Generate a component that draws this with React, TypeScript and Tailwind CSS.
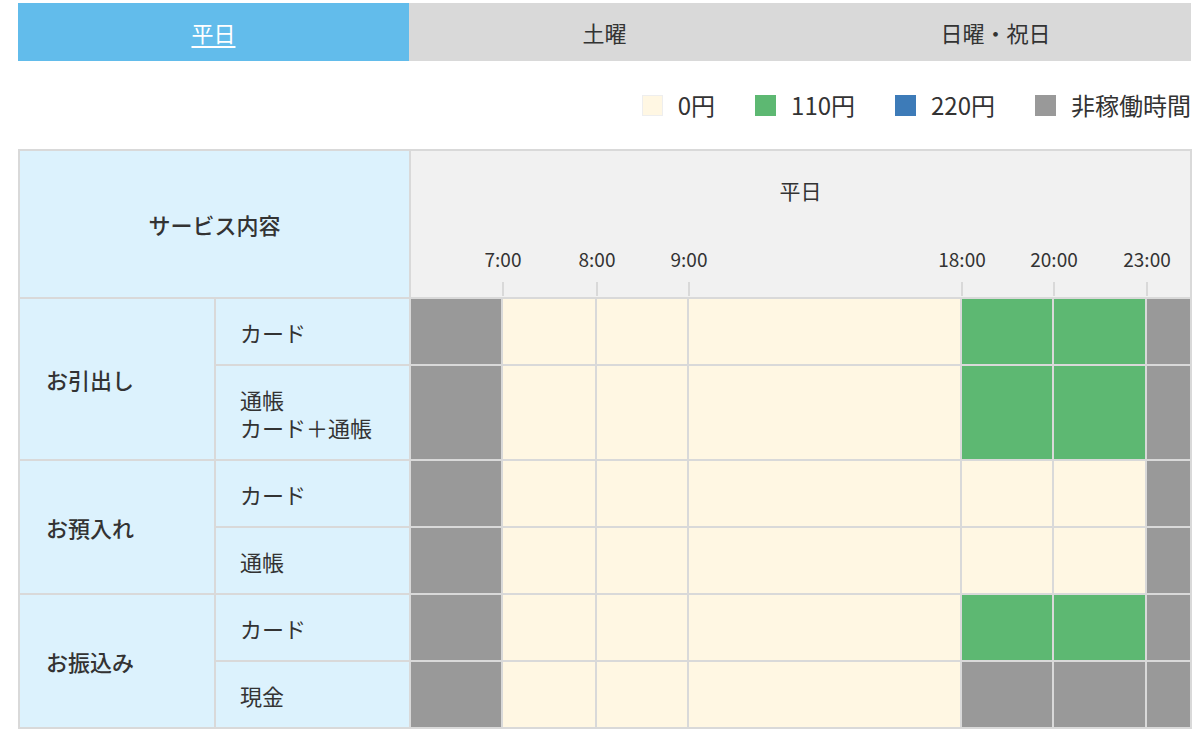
import React from 'react';

type Cell = 'off' | 'free' | 'fee110' | 'fee220';

interface Row {
  label: React.ReactNode;
  cells: Cell[];
  tall?: boolean;
}

interface Group {
  name: string;
  rows: Row[];
}

const cellColor: Record<Cell, string> = {
  off: 'bg-[#999999]',
  free: 'bg-[#fff7e3]',
  fee110: 'bg-[#5db872]',
  fee220: 'bg-[#3d7bb8]',
};

const horas = ['7:00', '8:00', '9:00', '18:00', '20:00', '23:00'];

const grupos: Group[] = [
  {
    name: 'お引出し',
    rows: [
      { label: 'カード', cells: ['off', 'free', 'free', 'free', 'fee110', 'fee110', 'off'] },
      {
        label: (
          <>
            <div>通帳</div>
            <div>カード＋通帳</div>
          </>
        ),
        cells: ['off', 'free', 'free', 'free', 'fee110', 'fee110', 'off'],
        tall: true,
      },
    ],
  },
  {
    name: 'お預入れ',
    rows: [
      { label: 'カード', cells: ['off', 'free', 'free', 'free', 'free', 'free', 'off'] },
      { label: '通帳', cells: ['off', 'free', 'free', 'free', 'free', 'free', 'off'] },
    ],
  },
  {
    name: 'お振込み',
    rows: [
      { label: 'カード', cells: ['off', 'free', 'free', 'free', 'fee110', 'fee110', 'off'] },
      { label: '現金', cells: ['off', 'free', 'free', 'free', 'off', 'off', 'off'] },
    ],
  },
];

const legenda = [
  { cor: 'bg-[#fff7e3] border border-[#eeeeee]', texto: '0円' },
  { cor: 'bg-[#5db872]', texto: '110円' },
  { cor: 'bg-[#3d7bb8]', texto: '220円' },
  { cor: 'bg-[#999999]', texto: '非稼働時間' },
];

export default function App() {
  return (
    <div
      className="w-[1200px] h-[731px] bg-white text-[#333333] overflow-hidden"
      style={{ fontFamily: '"Noto Sans CJK JP", "Noto Sans", sans-serif' }}
    >
      {/* Tabs */}
      <div className="mx-[18px] mt-[3px] w-[1173px] flex h-[58px] text-[22px]">
        <div className="flex-1 flex items-center justify-center bg-[#62bceb] text-white underline underline-offset-4">
          平日
        </div>
        <div className="flex-1 flex items-center justify-center bg-[#d9d9d9]">土曜</div>
        <div className="flex-1 flex items-center justify-center bg-[#d9d9d9]">日曜・祝日</div>
      </div>

      {/* Legend */}
      <div className="w-[1191px] h-[88px] flex items-center justify-end gap-[40px] text-[24px]">
        {legenda.map((item) => (
          <div key={item.texto} className="flex items-center gap-[15px]">
            <span className={`w-[21px] h-[21px] ${item.cor}`}></span>
            <span>{item.texto}</span>
          </div>
        ))}
      </div>

      {/* Table */}
      <table className="ml-[18px] w-[1172px] table-fixed border-collapse text-[22px]">
        <colgroup>
          <col className="w-[196px]" />
          <col className="w-[195px]" />
          <col className="w-[92px]" />
          <col className="w-[94px]" />
          <col className="w-[92px]" />
          <col className="w-[273px]" />
          <col className="w-[92px]" />
          <col className="w-[93px]" />
          <col className="w-[45px]" />
        </colgroup>
        <thead>
          <tr className="h-[148px]">
            <th colSpan={2} className="border-2 border-[#d9d9d9] bg-[#dcf2fd] font-medium">
              サービス内容
            </th>
            <th colSpan={7} className="border-2 border-[#d9d9d9] bg-[#f1f1f1] p-0 align-top font-normal">
              <div className="h-[145px] flex flex-col">
                <div className="pt-[24px] text-center text-[21px]">平日</div>
                <div className="flex-1"></div>
                <div className="grid grid-cols-[92px_94px_92px_273px_92px_93px_44px] text-[19px]">
                  {horas.map((h) => (
                    <div key={h} className="flex flex-col items-end">
                      <div className="w-[80px] -mr-[40px] text-center leading-[24px]">{h}</div>
                      <div className="mt-[11px] h-[14px] w-[2px] -mr-[1px] bg-[#d9d9d9]"></div>
                    </div>
                  ))}
                  <div></div>
                </div>
              </div>
            </th>
          </tr>
        </thead>
        <tbody>
          {grupos.map((grupo) =>
            grupo.rows.map((row, i) => (
              <tr key={`${grupo.name}-${i}`} className={row.tall ? 'h-[95px]' : 'h-[67px]'}>
                {i === 0 && (
                  <td
                    rowSpan={grupo.rows.length}
                    className="border-2 border-[#d9d9d9] bg-[#dcf2fd] pl-[26px] font-medium"
                  >
                    {grupo.name}
                  </td>
                )}
                <td className="border-2 border-[#d9d9d9] bg-[#dcf2fd] pl-[24px] leading-[28px]">
                  {row.label}
                </td>
                {row.cells.map((c, j) => (
                  <td key={j} className={`border-2 border-[#d9d9d9] ${cellColor[c]}`}></td>
                ))}
              </tr>
            )),
          )}
        </tbody>
      </table>
    </div>
  );
}
